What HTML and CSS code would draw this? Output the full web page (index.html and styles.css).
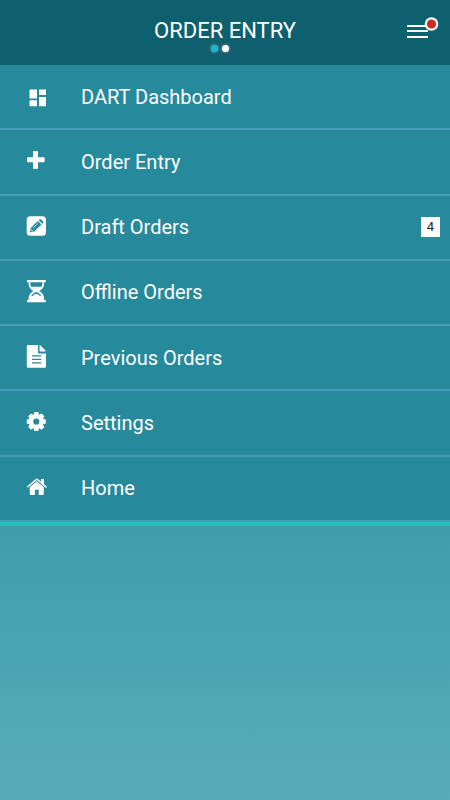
FILE: index.html
```html
<!DOCTYPE html>
<html lang="en">
<head>
<meta charset="utf-8">
<meta name="viewport" content="width=device-width, initial-scale=1">
<title>Order Entry</title>
<link rel="stylesheet" href="styles.css">
</head>
<body>
<header class="header">
  <div class="heading">
    <h1 class="title">ORDER ENTRY</h1>
    <div class="dots"><span class="dot dot-active"></span><span class="dot"></span></div>
  </div>
  <button class="menu-button" type="button" aria-label="Menu">
    <svg width="36" height="24" viewBox="0 0 36 24">
      <path fill="#fff" d="M3 9h21v2H3zM3 14h21v2H3zM3 20h21v2H3z"/>
      <circle cx="27.5" cy="8" r="6.8" fill="#fff"/>
      <circle cx="27.5" cy="8" r="4.6" fill="#cc2c20"/>
    </svg>
  </button>
</header>
<nav>
  <ul class="menu">
    <li class="entry"><a class="link" href="#dashboard">
      <svg class="icon" viewBox="0 0 24 24"><path d="M5.5 4.5H13v9H5.5zM5.5 15.3H13v6H5.5zM15 4.5h7V10h-7zM15 12h7v9.3h-7z"/></svg>
      <span class="label">DART Dashboard</span></a></li>
    <li class="entry"><a class="link" href="#order-entry">
      <svg class="icon" viewBox="0 0 24 24"><path d="M10 1h3q1 0 1 1v5.3h5.7q1 0 1 1v3q0 1-1 1H14V18q0 1-1 1h-3q-1 0-1-1v-5.7H4q-1 0-1-1v-3q0-1 1-1h5V2q0-1 1-1z"/></svg>
      <span class="label">Order Entry</span></a></li>
    <li class="entry"><a class="link" href="#drafts">
      <svg class="icon" viewBox="0 0 24 24"><rect x="2.7" y="1.3" width="19.3" height="19.4" rx="3.5"/><path class="cut" d="M6 17.2l.7-4.2 7.2-7 3.6 3.6-7.2 7zM14.7 5.2l.8-.8q.8-.6 1.6 0l2 2q.7.8 0 1.6l-.8.8z"/><path d="M7.3 14.2l1.8 1.8-1.1.3-1-1z"/><path class="thin" d="M9 13.2l4.8-4.7"/></svg>
      <span class="label">Draft Orders</span><span class="count">4</span></a></li>
    <li class="entry"><a class="link" href="#offline">
      <svg class="icon" viewBox="0 0 24 24"><path fill-rule="evenodd" d="M3 0h18.7v2.2h-1.5c0 4.4-1.5 6.7-5 8.9 3.5 2.1 5 4.5 5 9h1.5v2.2H3v-2.2h1.5c0-4.5 1.5-6.9 5-9-3.5-2.2-5-4.5-5-8.9H3zM6.2 2.2c0 1.8.3 3.2.9 4.6h10.5c.6-1.4.9-2.8.9-4.6zM12.3 12c-1.9.5-3.9 2-5 4.1h1.5c1-1.6 2-2.2 3.5-2.2s2.5.6 3.5 2.2h1.5c-1.1-2.1-3.1-3.6-5-4.1z"/></svg>
      <span class="label">Offline Orders</span></a></li>
    <li class="entry"><a class="link" href="#previous">
      <svg class="icon" viewBox="0 0 24 24"><path d="M4-1h10v7.5q0 1 1 1h7v13q0 1.2-1.2 1.2H4q-1.2 0-1.2-1.2V.2Q2.8-1 4-1zM15.5-1q.7.2 1.2.7l4.3 4.3q.6.6.8 1.5h-6.3z"/><path class="cut" d="M8 9.2h9.3v1.3H8zM8 12.7h9.3V14H8zM8 16.2h9.3v1.3H8z"/></svg>
      <span class="label">Previous Orders</span></a></li>
    <li class="entry"><a class="link" href="#settings">
      <svg class="icon" viewBox="0 0 24 24"><g transform="translate(12.3 10.6)"><path id="tooth" d="M-2-9.5h4l1 4h-6zM-2 9.5h4l1-4h-6zM-9.5-2v4l4 1v-6zM9.5-2v4l-4 1v-6z"/><use href="#tooth" transform="rotate(45)"/><circle r="7.2"/><circle class="cut" r="3.1"/></g></svg>
      <span class="label">Settings</span></a></li>
    <li class="entry"><a class="link" href="#home">
      <svg class="icon" viewBox="0 0 24 24"><path d="M12.8 5.3l7 6V18q0 1-1 1h-4.1v-5.3h-3.8V19H6.8q-1 0-1-1v-6.7z"/><path d="M3 10.5l8.7-7.5q1.1-.9 2.2 0L17 5.7V3h3v5.2l3 2.6-1 1.2-9.2-8-8.9 7.7z"/></svg>
      <span class="label">Home</span></a></li>
  </ul>
</nav>
</body>
</html>
```

FILE: styles.css
```css
* {
  box-sizing: border-box;
}

body {
  margin: 0;
  min-height: 100vh;
  background: linear-gradient(#0f606f 0, #2b8da0 30%, #409cab 66%, #58adba 100%);
  color: #fff;
  font-family: Roboto, "Liberation Sans", sans-serif;
}

.header {
  display: grid;
  grid-template-columns: 48px 1fr 48px;
  align-items: start;
  height: 65px;
  padding-top: 16px;
  background: #0f606f;
}

.heading {
  grid-column: 2;
  display: flex;
  flex-direction: column;
  align-items: center;
}

.title {
  margin: 0;
  font-size: 22px;
  font-weight: 400;
  line-height: 29px;
}

.dots {
  display: flex;
  gap: 4px;
  margin-right: 10px;
}

.dot {
  width: 7px;
  height: 7px;
  border-radius: 50%;
  background: #fff;
  box-shadow: 0 0 2px 1px #5b7f86;
}

.dot-active {
  background: #13b9d2;
}

.menu-button {
  width: 48px;
  height: 24px;
  padding: 0;
  border: 0;
  background: none;
  cursor: pointer;
}

.menu-button svg {
  display: block;
  width: 36px;
  margin-left: 2px;
}

.menu {
  display: grid;
  grid-auto-rows: 1fr;
  min-height: 461px;
  margin: 0;
  padding: 0;
  border-bottom: 4px solid #22c1b9;
  list-style: none;
}

.entry {
  display: flex;
  border-bottom: 2px solid #4b9aba;
  background: #27899c;
}

.link {
  display: flex;
  flex: 1;
  align-items: center;
  padding: 0 10px 0 24px;
  color: #fff;
  text-decoration: none;
}

.icon {
  width: 24px;
  height: 24px;
  margin-right: 33px;
  overflow: visible;
  fill: #fff;
}

.cut {
  fill: #27899c;
}

.thin {
  fill: none;
  stroke: #b5dbe2;
  stroke-width: 1;
}

.label {
  flex: 1;
  font-size: 20px;
  line-height: 24px;
}

.count {
  width: 19px;
  background: #fff;
  color: #222;
  font-size: 13px;
  line-height: 20px;
  text-align: center;
}
```
